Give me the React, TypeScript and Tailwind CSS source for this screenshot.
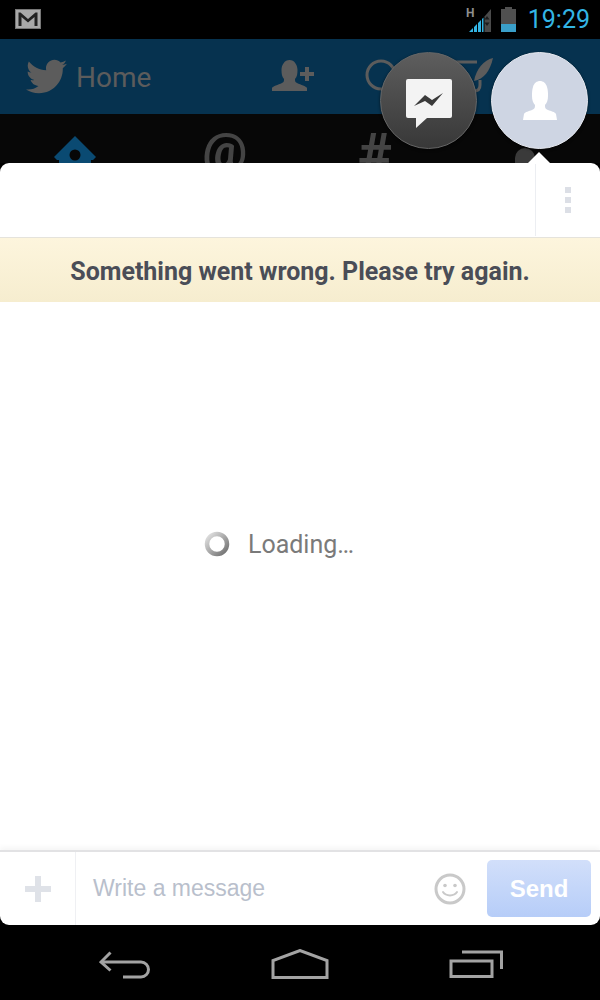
import { FaTwitter } from "react-icons/fa";

const ROBOTO = "font-['Roboto',sans-serif]";
const HELV = "font-['Liberation_Sans',sans-serif]";

function StatusBar() {
  return (
    <div className="relative flex h-[39px] shrink-0 items-center justify-between bg-black pl-[15px] pr-[10px]">
      <svg width="26" height="20" viewBox="0 0 26 20" className="-mt-[1px]">
        <rect x="0.5" y="0.5" width="25" height="19" fill="#a9a9a9" stroke="#777" />
        <path d="M3.5 17V3.5h2L13 10l7.500-6.500h2V17h-3V8l-6.500 5.500L6.500 8v9z" fill="#222" />
      </svg>
      <div className="flex items-center">
        <svg width="25" height="25" viewBox="0 0 25 25" className="mr-[10px]">
          <text x="0" y="10" fontSize="12" fontWeight="700" fill="#8f8f8f" fontFamily="Roboto, sans-serif">H</text>
          <path d="M3 25l4-4v4zM8 25v-5l3-3v8zM12 25V16l3-3v12zM16 25V12l1.500-1.500V25z" fill="#33b5e5" />
          <path d="M18.500 25V9.500L25 2v23z" fill="#4a4a4a" />
          <path d="M21 9l2.500 3.500h-5zM21 19l-2.500-3.500h5z" fill="#1c1c1c" />
        </svg>
        <svg width="15" height="25" viewBox="0 0 15 25" className="mr-[12px]">
          <path d="M4 0h7v2h4v23H0V2h4z" fill="#505050" />
          <rect x="0" y="17" width="15" height="8" fill="#3a9fc9" />
        </svg>
        <span className={`${ROBOTO} text-[25px] leading-none text-[#33b5e5]`}>19:29</span>
      </div>
    </div>
  );
}

function AppHeader() {
  return (
    <div className="relative flex h-[75px] shrink-0 items-center bg-[#06324f] pl-[26px] text-[#5c5c5c]">
      <FaTwitter className="h-[41px] w-[41px]" />
      <span className={`${ROBOTO} ml-[9px] mt-[3px] text-[28px] leading-none`}>Home</span>
      <svg width="42" height="33" viewBox="0 0 42 33" className="ml-[121px] mt-[-2px] shrink-0" fill="currentColor">
        <path d="M0 32V29C1 27 6 26 10 24C12 23 12 22 12 20C10 18 9.500 15 9.500 11C9.500 6 12.500 1 17.500 1S25.500 6 25.500 11C25.500 15 25 18 23 20C23 22 23 23 25 24C29 26 34 27 35 29V32Z" />
        <path d="M33 8h4v5h5v4h-5v5h-4v-5h-5v-4h5z" />
      </svg>
      <svg width="130" height="51" viewBox="0 0 130 51" className="ml-[50px] shrink-0" fill="none" stroke="currentColor" strokeWidth="3">
        <circle cx="17" cy="24" r="14" />
        <path d="M27 34l6 8" />
        <path d="M90 11h23M86 11v29h24q6 0 6-6v-5" />
        <path d="M129 7C120 9 112 18 110 30C120 28 126 20 129 7z" fill="currentColor" stroke="none" />
      </svg>
    </div>
  );
}

function Tabs() {
  return (
    <div className="grid h-[49px] shrink-0 grid-cols-4 overflow-hidden bg-[#070707] text-[#444]">
      <div className="flex justify-center pt-[22px]">
        <svg width="42" height="28" viewBox="0 0 42 28" fill="#0a4a72">
          <path d="M21 0l21 21-3 3h-2v4H5v-4H3l-3-3z" />
          <circle cx="21" cy="19" r="5.500" fill="#070707" />
        </svg>
      </div>
      <div className={`${ROBOTO} flex justify-center pt-[12px] text-[50px] font-bold leading-none`}>@</div>
      <div className={`${ROBOTO} flex justify-center pt-[11px] text-[58px] font-bold leading-none`}>#</div>
      <div className="flex justify-center pt-[34px]">
        <div className="h-[30px] w-[20px] rounded-full bg-[#3a3a3a]" />
      </div>
    </div>
  );
}

function ChatHeads() {
  return (
    <>
      <div className="absolute left-[380px] top-[52px] flex h-[97px] w-[97px] items-center justify-center rounded-full border border-[#666] bg-gradient-to-b from-[#5e5e5e] to-[#383838] shadow-[0_1px_3px_rgba(0,0,0,0.6)]">
        <svg width="46" height="49" viewBox="0 0 46 49" className="ml-[1px] mt-[6px]">
          <path d="M2 0h42a2 2 0 0 1 2 2v35a2 2 0 0 1-2 2H21L10 49V39H2a2 2 0 0 1-2-2V2a2 2 0 0 1 2-2z" fill="#f3f3f3" />
          <path d="M8 27L19 16l7 5 11-7-11 13-7-5z" fill="#3a3a3a" />
        </svg>
      </div>
      <div className="absolute left-[491px] top-[52px] flex h-[97px] w-[97px] items-center justify-center rounded-full border border-[#e6e9f0] bg-[#ced5e3] shadow-[0_1px_3px_rgba(0,0,0,0.5)]">
        <svg width="34" height="39" viewBox="0 0 34 39" fill="#fff">
          <path d="M0 39l1-6c1-2 5-3 8-4 3-1 3-3 3-5-2-2-3-5-3-9 0-3 0-6 1-9 1-4 4-6 7-6s6 2 7 6c1 3 1 6 1 9 0 4-1 7-3 9 0 2 0 4 3 5 3 1 7 2 8 4l1 6z" />
        </svg>
      </div>
      <div className="absolute left-[528px] top-[152px] h-0 w-0 border-x-[11px] border-b-[11px] border-x-transparent border-b-white" />
    </>
  );
}

function CardTop() {
  return (
    <div className="flex h-[74px] shrink-0 justify-end">
      <div className="my-[1px] flex w-[65px] flex-col items-center justify-center gap-[4px] border-l border-[#eceef2]">
        <div className="h-[6px] w-[6px] bg-[#dcdfe6]" />
        <div className="h-[6px] w-[6px] bg-[#dcdfe6]" />
        <div className="h-[6px] w-[6px] bg-[#dcdfe6]" />
      </div>
    </div>
  );
}

function Composer() {
  return (
    <div className="flex h-[75px] shrink-0 items-center border-t-2 border-[#e2e2e4] shadow-[0_-3px_5px_rgba(0,0,0,0.04)]">
      <div className="flex h-full w-[76px] shrink-0 items-center justify-center border-r border-[#eff0f3]">
        <svg width="26" height="26" viewBox="0 0 26 26" fill="#dfe2e8">
          <path d="M10 0h6v10h10v6H16v10h-6V16H0v-6h10z" />
        </svg>
      </div>
      <span className={`${HELV} ml-[17px] flex-1 text-[23px] text-[#b9bfcc]`}>Write a message</span>
      <svg width="32" height="32" viewBox="0 0 32 32" fill="none" stroke="#c9c9c9" className="mr-[21px]">
        <circle cx="16" cy="16" r="14" strokeWidth="3" />
        <circle cx="11" cy="12.500" r="1.800" fill="#c9c9c9" stroke="none" />
        <circle cx="21" cy="12.500" r="1.800" fill="#c9c9c9" stroke="none" />
        <path d="M9 19c3 4.500 11 4.500 14 0" strokeWidth="2" strokeLinecap="round" />
      </svg>
      <div className={`${HELV} mr-[9px] flex h-[57px] w-[104px] items-center justify-center rounded-[5px] bg-gradient-to-b from-[#d2dffa] to-[#b6cdf8] text-[24px] font-bold text-white`}>
        Send
      </div>
    </div>
  );
}

function NavBar() {
  return (
    <div className="flex h-[75px] shrink-0 items-center bg-black pl-[99px] pt-[2px]">
      <svg width="52" height="30" viewBox="0 0 52 30" fill="none" stroke="#a3a3a3" strokeWidth="3">
        <path d="M11.500 3.500L2 13l9.500 8.500" />
        <path d="M2 13h40a7.500 7.500 0 0 1 0 15H24" />
      </svg>
      <svg width="58" height="30" viewBox="0 0 58 30" fill="none" stroke="#a3a3a3" strokeWidth="3" className="ml-[120px]">
        <path d="M2 28.500V11.500L29 1.500l27 10v17z" />
      </svg>
      <svg width="54" height="28" viewBox="0 0 54 28" fill="none" stroke="#a3a3a3" strokeWidth="3" className="ml-[120px]">
        <path d="M2 11h41v15.500H2z" />
        <path d="M13 2h39.500v17" />
      </svg>
    </div>
  );
}

export default function App() {
  return (
    <div className="relative flex h-[1000px] w-[600px] flex-col overflow-hidden bg-black">
      <StatusBar />
      <AppHeader />
      <Tabs />
      <div className="flex min-h-0 flex-1 flex-col overflow-hidden rounded-[9px] bg-white">
        <CardTop />
        <div className="flex h-[65px] shrink-0 items-center justify-center border-t border-[#e5e3dc] bg-gradient-to-b from-[#fdf5dd] to-[#f6edcf] pt-[3px]">
          <span className={`${ROBOTO} text-[25px] font-bold text-[#4a4d57]`}>Something went wrong. Please try again.</span>
        </div>
        <div className="flex flex-1 items-center justify-center pb-[64px] pr-[42px]">
          <svg width="26" height="26" viewBox="0 0 26 26" fill="none" className="mr-[18px]">
            <defs>
              <linearGradient id="spin" x1="0" y1="0" x2="1" y2="1">
                <stop offset="0" stopColor="#e4e4e4" />
                <stop offset="1" stopColor="#6e6e6e" />
              </linearGradient>
            </defs>
            <circle cx="13" cy="13" r="10" stroke="url(#spin)" strokeWidth="4.500" />
          </svg>
          <span className={`${ROBOTO} mt-[2px] text-[25px] text-[#7a7a7a]`}>Loading…</span>
        </div>
        <Composer />
      </div>
      <NavBar />
      <ChatHeads />
    </div>
  );
}
